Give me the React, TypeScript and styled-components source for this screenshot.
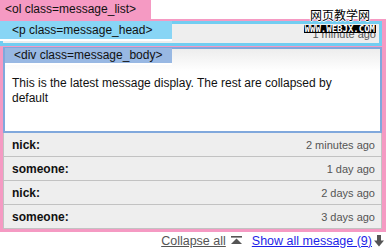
import styled, { createGlobalStyle } from "styled-components";

const GlobalStyle = createGlobalStyle`
    * {
        box-sizing: border-box;
    }
    body {
        margin: 0;
        background: #fff;
        font-family: "Liberation Sans", Arial, sans-serif;
        font-size: 12px;
        color: #111;
    }
`

type MessageType = {
    name: string
    time: string
}

const messages: MessageType[] = [
    {name: "nick:", time: "2 minutes ago"},
    {name: "someone:", time: "1 day ago"},
    {name: "nick:", time: "2 days ago"},
    {name: "someone:", time: "3 days ago"},
]

export default function App() {
    return (
        <Page>
            <GlobalStyle/>
            <ListTag>&lt;ol class=message_list&gt;</ListTag>
            <MessageList>
                <Head>
                    <Label bg="#88d5f5" top={-3} left={-3} width={172} height={20}>&lt;p class=message_head&gt;</Label>
                    <Time>1 minute ago</Time>
                </Head>
                <Body>
                    <Label bg="#98b8e3" top={-1} left={0} width={167} height={17}>&lt;div class=message_body&gt;</Label>
                    This is the latest message display. The rest are collapsed by default
                </Body>
                {messages.map((m, i) => (
                    <Row key={i}>
                        <Name>{m.name}</Name>
                        <Time>{m.time}</Time>
                    </Row>
                ))}
            </MessageList>
            <Footer>
                <GrayLink href="#">Collapse all</GrayLink>
                <UpIcon width="11" height="9" viewBox="0 0 11 9">
                    <rect x="0" y="0" width="11" height="1.6" fill="#555"/>
                    <polygon points="5.5,2.5 11,8 0,8" fill="#555"/>
                </UpIcon>
                <BlueLink href="#">Show all message (9)</BlueLink>
                <DownIcon width="10" height="12" viewBox="0 0 10 12">
                    <rect x="3" y="0" width="4" height="6" fill="#555"/>
                    <polygon points="0,5.5 10,5.5 5,11.5" fill="#555"/>
                </DownIcon>
            </Footer>
            <Watermark>
                <WmTitle>网页教学网</WmTitle>
                <WmSite>WWW.WEBJX.COM</WmSite>
            </Watermark>
        </Page>
    );
}

const Page = styled.div`
    position: relative;
    width: 386px;
    height: 250px;
    overflow: hidden;
`

const ListTag = styled.div`
    width: 151px;
    height: 19px;
    line-height: 19px;
    padding-left: 5px;
    background-color: #f59ac3;
    font-size: 12px;
    white-space: nowrap;
`

const MessageList = styled.div`
    background-color: #f59ac3;
    padding: 2px 4px 3px 3px;
    display: flex;
    flex-direction: column;
`

const Head = styled.div`
    position: relative;
    height: 25px;
    margin-left: -3px;
    border: 3px solid #72cdf1;
    background-color: #eeeeee;
    display: flex;
    align-items: center;
    justify-content: flex-end;
    padding-right: 3px;
`

type LabelProps = {
    bg: string
    top: number
    left: number
    width: number
    height: number
}
const Label = styled.div<LabelProps>`
    position: absolute;
    top: ${props => props.top}px;
    left: ${props => props.left}px;
    width: ${props => props.width}px;
    height: ${props => props.height}px;
    line-height: ${props => props.height - 2}px;
    padding-left: ${props => 12 - props.left - 3}px;
    background-color: ${props => props.bg};
    border-bottom: 2px solid #fff;
    font-size: 12px;
    color: #111;
    white-space: nowrap;
`

const Body = styled.div`
    position: relative;
    margin-top: 1px;
    height: 86px;
    border: 2px solid #80a8dc;
    background: linear-gradient(#ededed, #ffffff 22px);
    padding: 27px 40px 0 7px;
    line-height: 15px;
    font-size: 12px;
`

const Row = styled.div`
    height: 25px;
    margin-top: -1px;
    border: 1px solid #c2c2c2;
    background-color: #eeeeee;
    display: flex;
    align-items: center;
    justify-content: space-between;
    padding: 0 6px 0 8px;
    &:first-of-type {
        margin-top: 1px;
    }
`

const Name = styled.span`
    font-weight: bold;
    font-size: 12px;
`

const Time = styled.span`
    font-size: 11px;
    color: #555;
`

const Footer = styled.div`
    height: 17px;
    display: flex;
    align-items: center;
    justify-content: flex-end;
    padding-right: 2px;
    font-size: 12.5px;
`

const UpIcon = styled.svg`
    margin: 0 10px 0 5px;
`

const DownIcon = styled.svg`
    margin-left: 2px;
`

const GrayLink = styled.a`
    color: #555;
    text-decoration: underline;
`

const BlueLink = styled.a`
    color: #1f1fe8;
    text-decoration: underline;
`

const Watermark = styled.div`
    position: absolute;
    top: 7px;
    left: 300px;
    display: flex;
    flex-direction: column;
    align-items: flex-end;
    width: 76px;
`

const WmTitle = styled.span`
    font-family: "Noto Sans CJK SC", sans-serif;
    font-size: 12px;
    line-height: 16px;
    color: #000;
    white-space: nowrap;
    margin-right: 6px;
    text-shadow: 1px 0 #fff, -1px 0 #fff, 0 1px #fff, 0 -1px #fff;
`

const WmSite = styled.span`
    margin-top: 2px;
    background: #000;
    color: #fff;
    font-family: "DejaVu Sans Mono", monospace;
    font-weight: bold;
    font-size: 9px;
    line-height: 8px;
    white-space: nowrap;
    padding: 0 1px;
`
